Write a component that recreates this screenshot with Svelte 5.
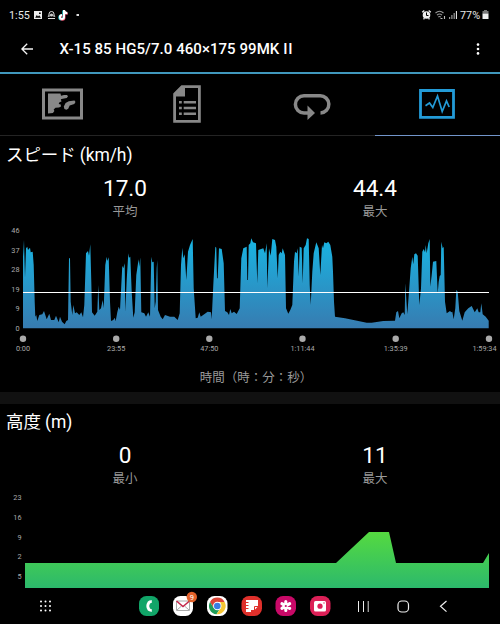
<script lang="ts">
  interface Tick {
    label: string;
    pos: number;
  }

  // Samples are x,y pairs in thirds of a pixel, relative to each run's start.
  const runs: { start: number; samples: string }[] = [
    {
      start: 0,
      samples:
        "69,310 69,95 72,45 75,158 78,70 82,65 84,75 90,68 92,82 98,80 101,120 104,230 106,275 109,270 112,288 118,270 127,268 132,258 140,283 148,266 153,285 163,285 168,272 176,292 180,275 186,290 194,298 199,288 204,285 207,100 210,100 212,230 217,270 220,240 225,265 230,262 238,270 244,262 249,277 253,240 258,85 264,78 267,92 271,58 274,170 276,262 284,272 292,260 295,180 298,255 303,250 308,225 311,250 316,120 320,95 322,108 326,97 330,230 333,288 340,285 344,278 347,288 352,262 356,245 360,255 367,122 370,130 374,115 376,260 380,165 385,85 387,98 391,95 395,200 400,278 404,262 409,150 414,115 416,103 418,125 421,97 424,262 433,265 438,275 445,262 450,275 454,95 457,112 461,110 464,250 467,230 470,130 472,105 474,255 482,275 488,283",
    },
    {
      start: 495,
      samples:
        "0,270 15,275 28,275 38,285 44,265 48,120 52,68 55,100 59,88 64,165 69,80 75,60 83,42 86,190 92,280 98,278 103,262 107,275 128,260 138,262 140,283 145,180 151,65 154,68 156,160 158,160 162,70 170,72 176,115 180,258 187,262 192,270 196,252 200,265 207,260 215,267 224,250 229,100 235,70 245,65 247,165 249,165 251,60 256,55 259,40 264,52 273,55 277,175 280,75 295,70 300,85 305,55 307,190 312,70 317,92 322,42 330,45 334,65 338,160 341,90 346,80 350,85 353,70 360,90 363,250 370,266 376,255 382,240 387,110 390,80 395,85 398,70 401,155 404,65 410,68 413,175 416,70 422,60 426,40 431,42 434,180 437,240 442,140 446,85 454,52 461,70 466,150 471,60 474,70 478,52 484,55 490,50 496,60",
    },
    {
      start: 975,
      samples:
        "22,95 24,140 27,230 30,275 60,280 100,288 125,293 140,293 175,288 210,287 214,262 219,258 223,280 230,265 235,262 239,270 241,175 247,268 252,200 257,130 262,95 265,118 268,88 273,85 278,92 283,240 288,190 292,80 296,72 300,82 302,60 305,85 310,55 314,42 316,185 320,150 324,110 334,108 338,205 341,170 344,153 347,150 349,50 353,70 356,65 360,230 365,265 375,258 379,262 382,260 386,283 391,250 394,195 398,200 403,258 412,287 419,262 430,250 440,243 449,262 457,250 461,262 466,262 469,235 473,268 482,275 491,287 491,310",
    },
  ];

  const speedPoints = runs
    .flatMap((run) =>
      run.samples.split(" ").map((pair) => {
        const [x, y] = pair.split(",").map(Number);
        return `${((x + run.start) / 3).toFixed(1)},${(y / 3).toFixed(1)}`;
      }),
    )
    .join(" ");

  const speedTicks: Tick[] = [
    { label: "46", pos: 8 },
    { label: "37", pos: 27.5 },
    { label: "28", pos: 47 },
    { label: "19", pos: 67 },
    { label: "9", pos: 86 },
    { label: "0", pos: 106 },
  ];
  const timeTicks: Tick[] = [
    { label: "0:00", pos: 23 },
    { label: "23:55", pos: 116.2 },
    { label: "47:50", pos: 209.3 },
    { label: "1:11:44", pos: 302.5 },
    { label: "1:35:39", pos: 395.7 },
    { label: "1:59:34", pos: 489 },
  ];
  const heightTicks: Tick[] = [
    { label: "23", pos: 10 },
    { label: "16", pos: 29.5 },
    { label: "9", pos: 49.5 },
    { label: "2", pos: 68.5 },
    { label: "5", pos: 88.5 },
  ];
</script>

{#snippet stat(value: string, label: string)}
  <div class="stat">
    <span class="value">{value}</span>
    <span class="label">{label}</span>
  </div>
{/snippet}

<div class="screen">
  <div class="status">
    <span class="clock">1:55</span>
    <svg class="status-left" width="52" height="14" viewBox="0 0 52 14">
      <path fill="#eee" fill-rule="evenodd" d="M1 3h8v8H1zM2.2 9.7h5.8L6.2 7.3 5 8.5 3.8 7zM6 4.5h1.7v1.4H6z" />
      <path fill="none" stroke="#ddd" d="M16 9V6a2.5 2.5 0 0 1 5 0v3M15 10.5h7M14.8 8.5l1.5-1M22.2 8.5l-1.5-1" />
      <circle cx="18.5" cy="7" r="1.6" fill="#ccc" />
      <path transform="translate(-.7 .5)" fill="none" stroke="#25d9e0" stroke-width="2" d="M31 2v7a2 2 0 1 1-2-2M31 2.5c.3 1.7 1.5 2.5 3.3 2.6" />
      <path transform="translate(.5 .7)" fill="none" stroke="#f34b67" stroke-width="2" d="M31 2v7a2 2 0 1 1-2-2M31 2.5c.3 1.7 1.5 2.5 3.3 2.6" />
      <path fill="none" stroke="#fff" stroke-width="2" d="M31 2v7a2 2 0 1 1-2-2M31 2.5c.3 1.7 1.5 2.5 3.3 2.6" />
      <rect x="43.5" y="6" width="2.5" height="2" fill="#ddd" />
    </svg>
    <svg class="status-right" width="38" height="14" viewBox="0 0 38 14">
      <circle cx="5.5" cy="7" r="3.8" fill="#eee" />
      <path stroke="#eee" stroke-width="1.3" d="M1.2 4.2 3.3 2.5M9.8 4.2 7.7 2.5M2.5 11.2l1-1M8.5 11.2l-1-1" />
      <path fill="none" stroke="#000" d="M5.5 4.5v3h2" />
      <g fill="none" stroke="#999" stroke-width="1.1">
        <path d="M14.5 5c2.7-2.3 5.5-2.3 8 0M16 7.2c1.6-1.5 3.4-1.5 5 0M17.3 9.1c.9-.8 1.7-.8 2.5 0" />
        <path stroke="#bbb" d="M19.5 10.5h2M23.5 8v3" />
      </g>
      <path fill="#999" d="M28 9h1.2v2H28zM30.3 7h1.2v4h-1.2zM32.6 5h1.2v6h-1.2z" />
      <path fill="#ddd" d="M34.9 3h1.1v8h-1.1z" />
    </svg>
    <span class="percent">77%</span>
    <svg class="battery" width="7" height="10" viewBox="0 0 7 10">
      <path fill="#777" d="M2 0h3v1h1.5v3h-6V1H2z" />
      <path fill="#eee" d="M.5 3.7h6V9h-6z" />
    </svg>
  </div>

  <header>
    <svg class="back" width="12" height="12" viewBox="0 0 12 12">
      <path fill="none" stroke="#f4f4f4" stroke-width="1.3" d="M12 6H1M6.2.7.9 6l5.3 5.3" />
    </svg>
    <h1>X-15 85 HG5/7.0 460×175 99MK <span class="numeral">II</span></h1>
    <svg class="more" width="4" height="12" viewBox="0 0 4 12">
      <g fill="#fff">
        <circle cx="2" cy="1.6" r="1.3" />
        <circle cx="2" cy="6" r="1.3" />
        <circle cx="2" cy="10.4" r="1.3" />
      </g>
    </svg>
  </header>

  <nav class="tabs">
    <div class="tab">
      <svg width="42" height="32" viewBox="0 0 42 32">
        <path fill="none" stroke="#888" stroke-width="3" d="M2.5 2h38v28h-38z" />
        <path fill="#888" d="M7 5.5h12.5l.5 2.3 3-.7h3l1 1.2-1.2 1.7-4 .8-2 .5.7 2.2-2 .8-.8 1.7 2 .5.3 2-2 1-3.5.2-1.8 1.8.7 1.5-1.5 2-4.9.5zM33.5 12.5l1 1.5-1.2 2-4.6 1.5-1.5 3.2-1.8 1.1-2-.8-.6-2.5 1.8-3.5 3.2-1.8z" />
      </svg>
    </div>
    <div class="tab">
      <svg width="28" height="38" viewBox="0 0 28 38">
        <path fill="none" stroke="#888" stroke-width="2.8" d="M9 1.6h17.4v34.8H1.6V9z" />
        <path fill="#888" d="M8.5 1H12v10.5H1V8.5z" />
        <path fill="#888" d="M6 16h2.8v2.6H6zM10.7 16H23v2.6H10.7zM6 21.7h2.8v2.6H6zM10.7 21.7H23v2.6H10.7zM6 27.4h2.8V30H6zM10.7 27.4H23V30H10.7z" />
      </svg>
    </div>
    <div class="tab">
      <svg class="loop" width="38" height="27" viewBox="0 0 38 27">
        <path fill="none" stroke="#888" stroke-width="3.5" d="M16 20h-5a8.6 8.6 0 0 1 0-17.2h16A8.6 8.6 0 0 1 27.5 20" />
        <path fill="#888" d="M14.5 12.5 22 20l-7.5 7z" />
      </svg>
    </div>
    <div class="tab active">
      <svg width="36" height="30" viewBox="0 0 36 30">
        <path fill="none" stroke="#239bd7" stroke-width="2.8" d="M1.5 1.5h33v26.8h-33z" />
        <path fill="none" stroke="#239bd7" stroke-width="1.7" d="m6.5 16.7 4-2.7 3.3 4.5L18.5 7l4.7 15.5L27.5 12l2.7 6" />
      </svg>
    </div>
  </nav>

  <section class="speed">
    <h2>スピード (km/h)</h2>
    <div class="stats">
      {@render stat("17.0", "平均")}
      {@render stat("44.4", "最大")}
    </div>
    <svg class="chart" width="500" height="135" viewBox="0 0 500 135">
      <defs>
        <linearGradient id="speed-fill" gradientUnits="userSpaceOnUse" x1="0" y1="14" x2="0" y2="104">
          <stop offset="0" stop-color="#19b4e2" />
          <stop offset="1" stop-color="#377bb0" />
        </linearGradient>
      </defs>
      <polygon points={speedPoints} fill="url(#speed-fill)" />
      <rect x="23" y="67" width="466" height="1" fill="#fff" />
      {#each speedTicks as tick (tick.label)}
        <text class="tick" x="19.5" y={tick.pos} text-anchor="end">{tick.label}</text>
      {/each}
      {#each timeTicks as tick, i (tick.label)}
        <circle cx={tick.pos} cy="113.8" r="3.2" fill="#aaa" />
        <text class="tick" x={i === 5 ? 484.5 : tick.pos} y="126" text-anchor="middle">{tick.label}</text>
      {/each}
    </svg>
    <p class="axis">時間（時：分：秒）</p>
  </section>

  <section class="height">
    <h2>高度 (m)</h2>
    <div class="stats">
      {@render stat("0", "最小")}
      {@render stat("11", "最大")}
    </div>
    <svg class="chart" width="500" height="98" viewBox="0 0 500 98">
      <defs>
        <linearGradient id="height-fill" gradientUnits="userSpaceOnUse" x1="0" y1="42" x2="0" y2="98">
          <stop offset="0" stop-color="#55da40" />
          <stop offset="1" stop-color="#2cb96c" />
        </linearGradient>
      </defs>
      <polygon points="25,98 25,73 336,73 369,42 389,42 396,73 483,73 489,63 489,98" fill="url(#height-fill)" />
      {#each heightTicks as tick (tick.label)}
        <text class="tick" x="21.5" y={tick.pos} text-anchor="end">{tick.label}</text>
      {/each}
    </svg>
  </section>

  <footer>
    <svg width="500" height="36" viewBox="0 0 500 36">
      <g fill="#fff">
        {#each [13.5, 18, 22.5] as y}
          {#each [41, 45.5, 50] as x}
            <circle cx={x} cy={y} r="1" />
          {/each}
        {/each}
      </g>

      <rect x="139" y="8" width="20" height="20" rx="7.5" fill="#11a568" />
      <path fill="none" stroke="#fff" stroke-width="2.8" d="M151.8 13.7c-1.2-.1-2.2 0-2.9.7-1.5 2.3-1.5 4.9 0 7.2.7.7 1.7.8 2.9.7" />

      <rect x="173" y="8" width="20" height="20" rx="7.5" fill="#fff" />
      <path fill="none" stroke="#aaa" d="M176.5 13h13v9.5h-13zM177 22l4.5-4M189 22l-4.5-4" />
      <path fill="none" stroke="#c32749" stroke-width="1.5" d="m176.5 13 6.5 5.5 6.5-5.5" />
      <circle cx="191.8" cy="9" r="5.2" fill="#e3622b" />
      <text class="badge" x="191.8" y="11.7" text-anchor="middle">9</text>

      <rect x="207" y="8" width="20.5" height="20" rx="7.5" fill="#fff" />
      <path fill="#dc4437" d="M210 14a8.2 8.2 0 0 1 14.6 0h-7.3l-3.5 6z" />
      <path fill="#209c57" d="M210 14a8.2 8.2 0 0 0 6.5 12.2l3.8-6.2-3-2-3.5 2z" />
      <path fill="#f6c634" d="M224.6 14a8.2 8.2 0 0 1-8.1 12.2l4.3-6.2-.5-6z" />
      <circle cx="217.3" cy="18" r="4.2" fill="#fff" />
      <circle cx="217.3" cy="18" r="3.3" fill="#397de3" />

      <rect x="241.5" y="8" width="20.5" height="20" rx="7.5" fill="#df302b" />
      <path fill="#fff" d="M246 12h12v6.5l-3.5 3.5H251v2h-5z" />
      <path fill="none" stroke="#df302b" d="M246 14.5h2.5M246 17.5h2.5M246 20.5h2.5M254.5 22v-3.5h3.5" />

      <rect x="275.5" y="8" width="20.5" height="20" rx="7.5" fill="#c80967" />
      <g stroke="#fff" stroke-width="3.1" stroke-linecap="round">
        <path d="M285.8 13.5v9M281.9 15.7l7.8 4.6M289.7 15.7l-7.8 4.6" />
      </g>
      <circle cx="285.8" cy="18" r="1.1" fill="#c80967" />

      <rect x="310" y="8" width="20.5" height="20" rx="7.5" fill="#dc2057" />
      <rect x="314" y="13" width="12" height="10.5" rx="1.5" fill="#fff" />
      <circle cx="320" cy="18.2" r="2.6" fill="#dc2057" />
      <circle cx="324" cy="15" r=".7" fill="#dc2057" />

      <path stroke="#eee" d="M358.5 13v11M363.5 13v11" />
      <path stroke="#999" stroke-width="1.4" d="M368.3 13v11" />
      <rect x="398" y="13" width="10.5" height="11" rx="3.8" fill="none" stroke="#eee" stroke-width="1.2" />
      <path fill="none" stroke="#eee" stroke-width="1.2" d="m446.5 13-6 5.3 6 5.3" />
    </svg>
  </footer>
</div>

<style>
  :global(body) {
    background: #000;
  }
  .screen {
    width: 500px;
    height: 624px;
    overflow: hidden;
    display: flex;
    flex-direction: column;
    background: #000;
    color: #fff;
    font-family: Roboto, "Noto Sans CJK JP", sans-serif;
  }
  svg {
    display: block;
    flex: none;
  }
  .status {
    height: 30px;
    box-sizing: border-box;
    display: flex;
    align-items: center;
    padding: 0 11px 0 9px;
    color: #e8e8e8;
    font-size: 10.8px;
  }
  .clock {
    width: 24px;
  }
  .status-right {
    margin-left: auto;
    margin-right: 1px;
  }
  .percent {
    width: 22px;
  }
  header {
    height: 42px;
    box-sizing: border-box;
    display: flex;
    align-items: center;
    padding: 0 20px 4px 21px;
  }
  h1 {
    margin: 0 auto 0 26.5px;
    font-size: 15px;
    font-weight: 500;
    line-height: 20px;
    white-space: nowrap;
    letter-spacing: 0.06px;
  }
  .numeral {
    letter-spacing: 0.8px;
  }
  .tabs {
    display: flex;
    height: 64px;
    box-sizing: border-box;
    border-top: 2px solid #4098bd;
  }
  .tab {
    width: 25%;
    box-sizing: border-box;
    display: flex;
    align-items: center;
    justify-content: center;
    padding: 0 1px 1px 0;
    border-bottom: 1px solid #242424;
  }
  .tab.active {
    border-bottom-color: #7295ca;
  }
  .loop {
    margin-top: 4px;
  }
  section {
    box-sizing: border-box;
    overflow: hidden;
  }
  .speed {
    height: 256px;
  }
  .height {
    height: 196px;
    border-top: 12px solid #111;
  }
  h2 {
    margin: 0;
    box-sizing: border-box;
    padding: 7px 0 0 6px;
    height: 39px;
    font-size: 17.5px;
    font-weight: 400;
    line-height: 24px;
    letter-spacing: -0.1px;
  }
  .height h2 {
    height: 38px;
    padding-top: 6px;
  }
  .stats {
    display: flex;
    height: 50px;
  }
  .height .stats {
    height: 48px;
  }
  .stat {
    flex: 1;
    display: flex;
    flex-direction: column;
    align-items: center;
  }
  .value {
    font-size: 22.6px;
    line-height: 26px;
    margin-top: 1px;
  }
  .label {
    margin-top: 1px;
    font-size: 12.5px;
    line-height: 18px;
    color: #999;
  }
  .tick {
    font-size: 7.3px;
    fill: #aaa;
  }
  .badge {
    font-size: 7.5px;
    fill: #fff;
  }
  .axis {
    margin: 8px 0 0;
    padding-left: 12px;
    text-align: center;
    font-size: 12.5px;
    line-height: 20px;
    color: #999;
  }
  footer {
    height: 36px;
  }
</style>
